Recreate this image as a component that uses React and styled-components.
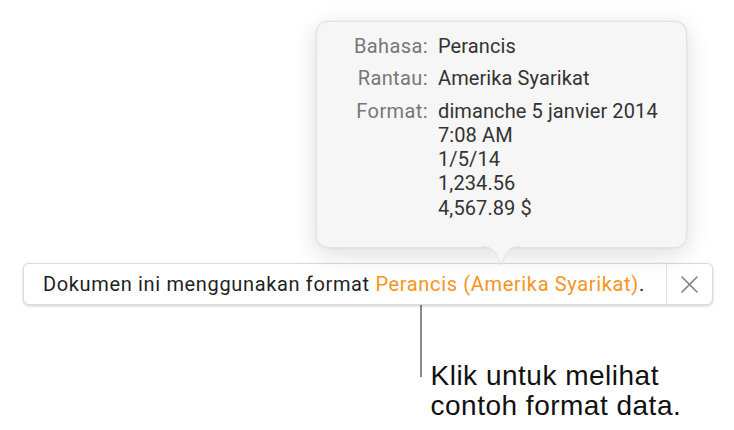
import React from "react";
import styled, { createGlobalStyle } from "styled-components";

const GlobalStyle = createGlobalStyle`
  body {
    margin: 0;
    background: #ffffff;
    font-family: Roboto, "Liberation Sans", sans-serif;
  }
`;

const Page = styled.div`
  width: 734px;
  height: 430px;
  padding-top: 21px;
  box-sizing: border-box;
  overflow: hidden;
`;

const Popover = styled.div`
  position: relative;
  z-index: 2;
  margin-left: 316px;
  width: 371px;
  height: 227px;
  box-sizing: border-box;
  padding: 12px 0 0 18px;
  background: #f6f6f6;
  border: 1px solid #e2e2e2;
  border-radius: 12px;
  box-shadow: 0 6px 24px rgba(0, 0, 0, 0.14), 0 0 2px rgba(0, 0, 0, 0.08);
`;

const Arrow = styled.svg`
  position: absolute;
  left: 165px;
  top: 224px;
  width: 38px;
  height: 22px;
`;

const InfoGrid = styled.div`
  display: grid;
  grid-template-columns: 93px auto;
  column-gap: 10px;
  row-gap: 8px;
  font-size: 20px;
  letter-spacing: 0.1px;
  line-height: 24.3px;
`;

const Label = styled.div`
  text-align: right;
  color: #777777;
  letter-spacing: 0.4px;
`;

const Value = styled.div`
  color: #333333;
`;

const Bar = styled.div`
  position: relative;
  z-index: 1;
  display: flex;
  align-items: stretch;
  margin: 15px 0 0 23px;
  width: 690px;
  height: 42px;
  box-sizing: border-box;
  background: #ffffff;
  border: 1px solid #dcdcdc;
  border-radius: 6px;
  box-shadow: 0 1px 3px rgba(0, 0, 0, 0.2);
`;

const Message = styled.div`
  flex: 1;
  display: flex;
  align-items: center;
  padding-left: 19px;
  font-size: 20px;
  letter-spacing: 0.65px;
  color: #1f1f1f;
  white-space: nowrap;
`;

const Locale = styled.span`
  color: #f7931e;
`;

const CloseButton = styled.div`
  width: 45px;
  display: flex;
  align-items: center;
  justify-content: center;
  border-left: 1px solid #e0e0e0;
  color: #808080;
`;

const Callout = styled.div`
  display: flex;
  align-items: flex-start;
  margin-left: 420px;
`;

const Leader = styled.div`
  width: 1.5px;
  height: 72px;
  background: #8a8a8a;
`;

const CalloutText = styled.div`
  margin: 56px 0 0 9px;
  font-family: "Liberation Sans", Arial, sans-serif;
  font-size: 28px;
  letter-spacing: 0.5px;
  line-height: 30px;
  color: #111111;
`;

const rows = [
  { label: "Bahasa:", values: ["Perancis"] },
  { label: "Rantau:", values: ["Amerika Syarikat"] },
  {
    label: "Format:",
    values: [
      "dimanche 5 janvier 2014",
      "7:08 AM",
      "1/5/14",
      "1,234.56",
      "4,567.89 $",
    ],
  },
];

export default function App() {
  return (
    <Page>
      <GlobalStyle />
      <Popover>
        <InfoGrid>
          {rows.map((row) => (
            <React.Fragment key={row.label}>
              <Label>{row.label}</Label>
              <Value>
                {row.values.map((v) => (
                  <div key={v}>{v}</div>
                ))}
              </Value>
            </React.Fragment>
          ))}
        </InfoGrid>
        <Arrow viewBox="0 0 38 22">
          <path
            d="M0 0 C8 0 12 4 15 10 L19 19 L23 10 C26 4 30 0 38 0 Z"
            fill="#f6f6f6"
          />
          <path
            d="M0 0.5 C8 0.5 12 4 15 10 L19 19 L23 10 C26 4 30 0.5 38 0.5"
            fill="none"
            stroke="#e2e2e2"
            strokeWidth="1"
          />
        </Arrow>
      </Popover>
      <Bar>
        <Message>
          Dokumen ini menggunakan format&nbsp;
          <Locale>Perancis (Amerika Syarikat)</Locale>.
        </Message>
        <CloseButton>
          <svg width="17" height="17" viewBox="0 0 17 17">
            <path
              d="M1 1 L16 16 M16 1 L1 16"
              stroke="currentColor"
              strokeWidth="1.6"
              strokeLinecap="round"
            />
          </svg>
        </CloseButton>
      </Bar>
      <Callout>
        <Leader />
        <CalloutText>
          Klik untuk melihat
          <br />
          contoh format data.
        </CalloutText>
      </Callout>
    </Page>
  );
}
